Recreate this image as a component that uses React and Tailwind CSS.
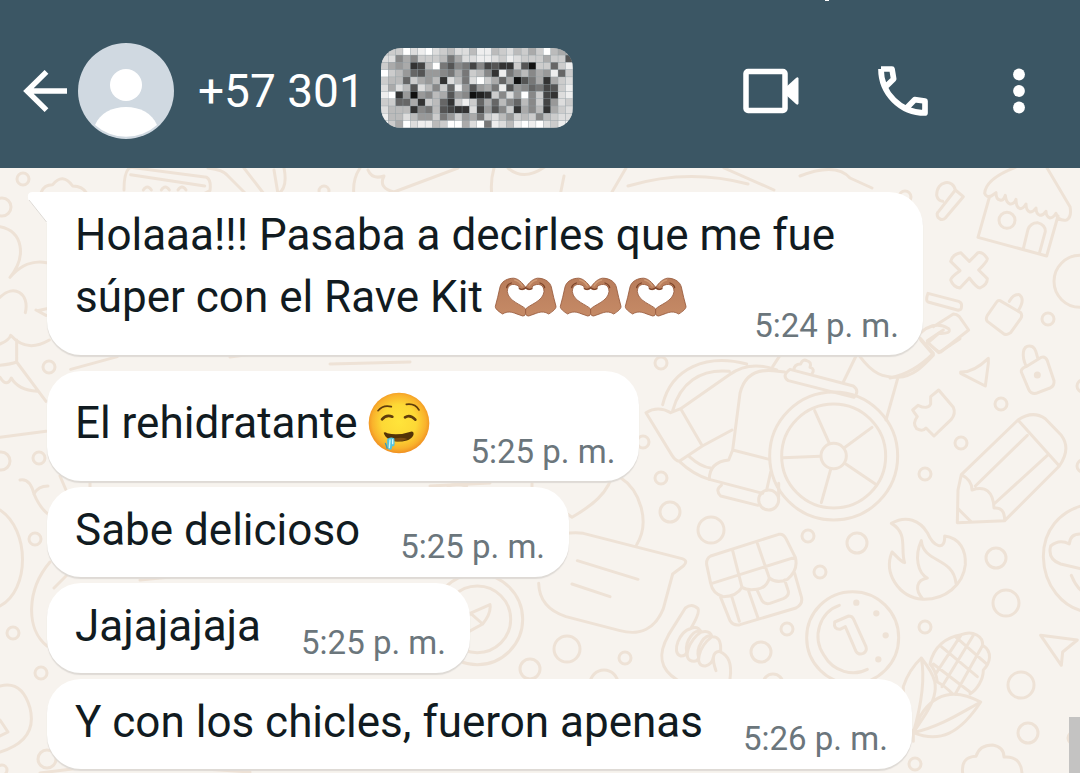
import { clsx } from 'clsx'

const messages = [
  { text: 'Holaaa!!! Pasaba a decirles que me fue súper con el Rave Kit', emoji: 'hands', time: '5:24 p. m.', tail: true },
  { text: 'El rehidratante', emoji: 'drool', time: '5:25 p. m.' },
  { text: 'Sabe delicioso', time: '5:25 p. m.' },
  { text: 'Jajajajaja', time: '5:25 p. m.' },
  { text: 'Y con los chicles, fueron apenas', time: '5:26 p. m.' }
]

// one hex digit of grey per cell
const mosaic = [
  'cccfdefdcbddbeebcdbcacfbaa',
  'dd8a8cccb7addeedcedcccacc5',
  'ca9a34bf7587484533c51cc6ce',
  'fcb9659987a7cb83e79b8a9e6c',
  'cbb6ca9b3db7dfca6a157a3acd',
  'dadb5db8c6e959a7e5986745ce',
  'ef39198ba598123c8d9f8c43de',
  'cc66a3cb63cec6a6b86b8c49dc',
  'dbbb387b5433d4958c3a8b3acd',
  'ebbdb99c79c9a7cdb9cbc8bcdd',
  'ecafdeebcffadf7edbefefdcee'
]

function HiddenNumber() {
  return (
    <svg viewBox="0 0 192 80" className="block h-20 w-48 rounded-[20px]" role="img" aria-label="Número oculto">
      <rect width="192" height="80" fill="#94a0a6" />
      {mosaic.map((row, y) =>
        row.split('').map((v, x) => (
          <rect
            key={`${x}-${y}`}
            x={x * 7.385}
            y={y * 7.27}
            width="7"
            height="6.9"
            fill={`#${v.repeat(6)}`}
          />
        ))
      )}
    </svg>
  )
}

function Header() {
  return (
    <header className="relative flex h-[168px] items-center bg-[#3b5664] pt-[14px] pr-[54px] pl-[22px] text-white">
      <span className="absolute top-0 left-[825px] h-px w-1 bg-white" />
      <button aria-label="Atrás" className="shrink-0">
        <svg viewBox="0 0 46 42" className="h-[42px] w-[46px]" fill="none" stroke="currentColor" strokeWidth="5.4">
          <path d="M24.500 1.900 5 21l19.500 19.100M5 21h40" />
        </svg>
      </button>
      <button className="ml-[10px] flex min-w-0 items-center">
        <svg viewBox="0 0 96 96" className="size-24 shrink-0" aria-hidden="true">
          <circle cx="48" cy="48" r="48" fill="#d0d9e1" />
          <circle cx="48" cy="42" r="16" fill="#fff" />
          <path d="M17 82C22 70 34 64 48 64s26 6 31 18A46.500 46.500 0 0 1 17 82Z" fill="#fff" />
        </svg>
        <span className="ml-6 text-[46px] leading-14 whitespace-nowrap">+57 301</span>
        <span className="mb-1.5 ml-4 shrink-0"><HiddenNumber /></span>
      </button>
      <div className="ml-auto flex shrink-0 items-center">
        <button aria-label="Videollamada">
          <svg viewBox="0 0 56 46" className="h-[46px] w-14">
            <rect x="3" y="3.500" width="39" height="39" rx="2" fill="none" stroke="currentColor" strokeWidth="5.500" />
            <path d="M42 20 53 10q2-1.500 2.500.5v25q-.5 2-2.500.5L42 26Z" fill="currentColor" />
          </svg>
        </button>
        <button aria-label="Llamar" className="ml-[79px]">
          <svg viewBox="0 0 150 150" className="size-[50px]" fill="none" stroke="currentColor" strokeWidth="17" strokeLinejoin="round">
            <path d="M9 9H42L47 39 24 61M9 9C9 82 68 141 141 141V105L110 101 88 124" />
          </svg>
        </button>
        <button aria-label="Más opciones" className="ml-[84px]">
          <svg viewBox="0 0 14 46" className="h-[46px] w-[14px]" fill="currentColor">
            <circle cx="7" cy="6.500" r="5.900" />
            <circle cx="7" cy="23" r="5.900" />
            <circle cx="7" cy="39.500" r="5.900" />
          </svg>
        </button>
      </div>
    </header>
  )
}

function HeartHands() {
  return (
    <svg viewBox="36 32 195 126" className="-my-2 inline-block h-[42px] w-[65px] align-[2px]" role="img" aria-label="Manos en forma de corazón">
      <defs>
        <linearGradient id="skin" x1="0" y1="0" x2="0" y2="1">
          <stop offset="0" stopColor="#b97d5b" />
          <stop offset="1" stopColor="#c58a66" />
        </linearGradient>
        <g id="hand">
          <path
            d="M131 66C122 54 107 35 88 39 72 41 58 50 54 65L47 96 40 123C39 130 50 139 62 146 76 137 90 140 102 145L122 152Q129 153 131 145V131C120 118 79 108 76 79 76 56 94 53 110 62 111 74 123 76 131 69Z"
            fill="url(#skin)"
            stroke="#96593b"
            strokeWidth="2.500"
            strokeLinejoin="round"
          />
          <path d="M74 67Q75 58 88 53M112 70Q121 75 131 67" fill="none" stroke="#7d4429" strokeWidth="4" strokeLinecap="round" />
          <path d="M98 44Q114 48 121 62" fill="none" stroke="#d09b76" strokeWidth="4" strokeLinecap="round" />
        </g>
      </defs>
      <use href="#hand" />
      <use href="#hand" transform="translate(262 0) scale(-1 1)" />
    </svg>
  )
}

function DroolFace() {
  return (
    <svg viewBox="0 0 186 186" className="-my-2 inline-block size-[62px] align-[-8px]" role="img" aria-label="Cara babeando">
      <defs>
        <radialGradient id="face" cx=".5" cy=".48" r=".52">
          <stop offset="0" stopColor="#ffe43a" />
          <stop offset=".55" stopColor="#fdd835" />
          <stop offset=".85" stopColor="#f9b22c" />
          <stop offset="1" stopColor="#f08f22" />
        </radialGradient>
      </defs>
      <circle cx="93" cy="93" r="91" fill="url(#face)" />
      <g fill="none" stroke="#5f3c0c" strokeLinecap="round">
        <path d="M30 56Q46 37 70 44" strokeWidth="5" />
        <path d="M115 37Q141 33 153 54" strokeWidth="5" />
        <path d="M42 82Q55 66 73 74" strokeWidth="8" />
        <path d="M111 76Q126 66 142 83" strokeWidth="8" />
      </g>
      <path d="M47 122Q51 118 58 124 90 132 128 119 137 117 137 126C132 157 55 157 47 122Z" fill="#533307" />
      <path d="M66 144Q95 153 118 141 96 132 66 144Z" fill="#7c4d10" />
      <path d="M57 142Q66 133 79 139L80 155Q79 166 73 162L71 171Q62 178 58 166Z" fill="#55c5df" />
      <path d="M66 144 64 167M74 143V155" stroke="#d8f6f6" strokeWidth="4" strokeLinecap="round" />
      <path d="M52 153 58 170" stroke="#3a9bbb" strokeWidth="4" />
    </svg>
  )
}

function Bubble({ message }) {
  const { text, emoji, time, tail } = message
  return (
    <li
      className={clsx(
        'relative flow-root w-fit max-w-[876px] rounded-[34px] bg-white pr-6 pl-7 shadow-[0_2px_1px_#dedad5]',
        tail && 'mb-4 rounded-tl-none pt-3 pb-[9px]',
        !tail && emoji && 'mb-1.5 pt-[21px] pb-[9px]',
        !emoji && 'mb-1.5 pt-3 pb-[10px]'
      )}
    >
      {tail && (
        <svg viewBox="0 0 24 40" className="absolute top-0 -left-5 h-10 w-6" aria-hidden="true">
          <path d="M20 31 1.500 8Q-1 0 6 0H24V40H20Z" fill="#fff" />
          <path d="M19.500 30 2 8" stroke="#dedad5" strokeWidth="1" />
        </svg>
      )}
      <span className="text-[44px] leading-[62px] text-[#111b21]">
        {text}{' '}
        {emoji === 'hands' && (
          <span className="whitespace-nowrap"><HeartHands /><HeartHands /><HeartHands /></span>
        )}
        {emoji === 'drool' && <DroolFace />}
      </span>
      <time className={clsx('float-right ml-10 text-[33px] leading-10 text-[#6b767c]', emoji ? 'mt-10' : 'mt-7')}>
        {time}
      </time>
    </li>
  )
}

const dots = [
  [661, 363, 6], [643, 442, 6], [661, 478, 6], [670, 512, 10], [711, 530, 13], [808, 536, 6],
  [857, 543, 10], [820, 572, 6], [925, 474, 6], [961, 443, 6], [1001, 404, 6], [1048, 319, 6],
  [996, 558, 10], [1006, 603, 13], [925, 627, 6], [787, 629, 6], [761, 652, 10], [773, 684, 10],
  [1021, 685, 13], [1028, 733, 10], [1074, 738, 6], [915, 764, 6], [1083, 386, 6], [1083, 466, 6],
  [567, 649, 13], [530, 669, 10], [625, 658, 6], [604, 684, 14], [23, 179, 6], [2, 207, 9],
  [49, 367, 6], [39, 458, 6], [1, 461, 9], [35, 539, 6], [13, 633, 6], [41, 673, 6], [47, 759, 9],
  [324, 191, 5], [905, 197, 6], [2, 770, 5]
]

function Wallpaper() {
  return (
    <svg
      viewBox="0 168 1080 605"
      preserveAspectRatio="xMinYMin slice"
      className="absolute inset-0 h-full w-full"
      fill="none"
      stroke="#eee2d6"
      strokeWidth="3"
      strokeLinecap="round"
      strokeLinejoin="round"
      aria-hidden="true"
    >
      {dots.map(([x, y, r]) => (
        <circle key={`${x}-${y}`} cx={x} cy={y} r={r} />
      ))}

      {/* wheelbarrow, pencil, puzzle piece, padlock */}
      <g transform="translate(640 340) scale(.33333)" strokeWidth="9">
        <circle cx="581" cy="348" r="192" />
        <circle cx="581" cy="348" r="156" />
        <circle cx="581" cy="348" r="38" />
        <path d="m568 310-44-98M612 324l84-62M614 370l92 62M572 388l-28 100M541 349l-113 4" />
        <path d="M18 218Q54 196 92 218L122 206 187 318 118 364Q106 362 96 346ZM122 206 268 104Q330 60 410 90M68 194C94 84 200 40 320 72M98 212C120 130 180 86 268 94M187 318 276 270M148 350Q184 382 212 384M118 364Q160 404 208 418" />
        <path d="M278 330 300 160Q318 84 400 92L434 96M278 330 266 360Q208 366 208 418L368 460M278 330 388 358M392 396 380 450M244 436Q224 450 242 468L354 496M416 430V470" />
        <circle cx="386" cy="480" r="30" />
        <path d="m450 88 190 50q20 14 2 34L445 122q-22-14 5-34ZM462 90q0-18 20-18 6-16 18-10 16 4 10 20 16 4 6 20M398 80l22-34M610 126l38-78M660 50C700 104 730 112 774 112 820 110 850 78 880 46M774 112 738 240M842 0l38 44M866 10l30 28 64-42M910-30l-48 32" />
        <path d="M962 96Q1000 98 1045 55V70L1036 138 962 100Z" />
        <path d="M1158 80 1204 52Q1216 48 1222 62L1242 122Q1244 138 1230 144L1188 160Q1172 162 1166 148L1144 96Q1142 86 1158 80ZM1158 78C1144 46 1148 18 1168 18S1188 40 1194 56" />
        <circle cx="1192" cy="105" r="6" fill="#eee2d6" />
        <path d="m896 150 44 52q8 18-6 36l-52 50-24-24q-10 12-28 2-14-16 2-36-8-10-14-20l16-14q30 14 38-4 0-18 0-22Z" />
        <path d="M964 404 1134 240Q1178 210 1216 236L1264 286Q1294 326 1258 378L1094 542 952 548 954 450ZM1134 240 1258 378M1162 286 1006 438M1222 346 1062 492M964 404Q996 420 996 450 1058 430 1062 504 1094 500 1094 542M954 506l40 40" />
      </g>

      {/* market stall, fire, coin, shaka, corn, globe, cloud */}
      <g transform="translate(640 520) scale(.33333)" strokeWidth="9">
        <path d="M212 108 416 43Q430 40 438 56L466 112Q476 150 442 178 410 192 388 174 380 204 350 208 320 212 306 202 290 230 250 230 218 222 212 190L200 134Q198 116 212 108ZM278 92 306 202M352 70 388 174M216 190 464 112M242 232 270 302Q280 318 300 314L468 264Q490 252 484 230L464 160M276 232l22 72M326 214l28 80M352 212l14 30q8 12 24 8l40-14q20-10 14-26l-10-30" />
        <path d="M754 10C800-16 840 2 862 38 880 80 916 96 914 48 960 54 978 90 976 134 970 194 916 240 848 238 776 232 730 160 756 96 772 110 780 124 794 128 780 90 806 40 754 10ZM848 236C824 210 828 180 862 174 834 160 822 110 844 62 850 130 940 110 948 190" />
        <circle cx="638" cy="353" r="138" />
        <path d="M598 256C540 276 514 350 552 406 580 456 640 470 682 448M584 306l42-18q10 0 14 8l38 84q4 14-8 20-14 6-22-6l-32-74-16 8q-20 0-16-22Z" />
        <g fill="#eee2d6">
          <circle cx="649" cy="248" r="5" /><circle cx="709" cy="280" r="5" />
          <circle cx="737" cy="346" r="5" /><circle cx="715" cy="418" r="5" />
        </g>
        <path d="M112 480C56 446 54 400 86 344L136 264Q156 248 174 266 180 280 152 326M152 326C120 330 92 400 122 408Q138 408 140 396C134 360 166 324 184 336 150 354 120 424 162 424Q172 424 176 414C166 384 196 336 216 350 176 380 160 440 196 438 214 434 218 424 220 412M152 326q20-10 32 10M184 336q26-6 32 14 28-2 26 42M228 452q-20-54 10-58 42 16 32 82" />
        <path d="M844 414C880 460 910 500 858 580L820 638Q788 600 790 500 806 450 844 414ZM844 414Q860 500 820 638C850 540 920 490 1022 546 960 640 900 670 820 638 900 620 960 580 1022 546M820 638v26" />
        <path d="M870 432C880 380 920 350 964 344 1000 330 1030 350 1028 376 1060 396 1050 430 1030 450 1030 480 1010 510 990 522M870 432q18 20 22 54 20 10 44 34M904 380 1012 470M880 432l110 84M946 350l92 80M964 344l-76 116M1028 376l-82 146M1000 346 906 500" />
        <path d="M1202 346l110 14-44 36-4 40ZM968 759q-6-48 40-50 10-34 50-34 34 6 34 36 50-4 54 48M1330-44C1260-26 1210 30 1210 110 1212 200 1270 260 1330 274M1320 42q-30 0-32 30-30-16-56 6-10 40 30 54l58 14M1294 166q12 30 30 46" />
      </g>

      {/* little house, letters and cards on the right */}
      <g transform="translate(900 160) scale(.33333)" strokeWidth="9">
        <path d="M346 22C300 40 256 66 254 100q6 14 20 8l14-10q0 20 12 22 10 4 16-14 2 22 14 26 12 2 18-14 0 24 12 28 10 0 18-14 0 20 12 24 10 0 18-12 0 18 12 22 10 0 18-12 0 16 12 20 10 0 18-14 6 24 32 20 16-10 10-40L440 22M268 112 234 232 440 288 474 168M370 266l14-58q8-20 28-20 24 6 24 26l-18 66" />
        <circle cx="321" cy="181" r="24" />
        <path d="M110 106C110 60 160 56 166 90L190 110 136 174Q126 184 114 172 108 160 116 154L166 90M110 106q4 16 18 18" />
        <path d="m182 278 26 26 26-26q14-4 28 18 0 8-26 34l26 26q0 18-22 28-10 0-32-30l-28 30q-20-2-28-24 0-8 28-28l-28-28q6-22 30-26Z" />
        <path d="m84 400 92 24q12 4 8 20-2 8-12 6l-88-24q-8-4 0-26ZM50 530q50-54 96-24 10 16-30 14l-30 26M100 500l60-38q10 0 18 8l28 40-84 66q-10 0-40-30M60 534l40 46C60 620 20 644-30 654" />
        <path d="m300 422 62 36q6 8 0 18l-30 42q-10 8-20 4l-50-38q-6-6 0-18l28-40q4-6 10-4ZM328 424q12-22 30-20 18 14-2 46M540 286a78 78 0 0 0 0 156" />
      </g>

      {/* chat bubble and compass between the messages */}
      <g transform="translate(440 470) scale(.33333)" strokeWidth="9">
        <path d="M340 204Q380 184 430 190L726 266Q746 272 730 288L698 312 670 416C646 476 600 498 540 482L378 440Q298 414 296 340M412 272l182 56M396 342l114 38M520 0C510 70 450 110 396 142L370 124M540 22C600 60 632 156 590 224" />
        <circle cx="112" cy="448" r="136" />
        <circle cx="112" cy="448" r="100" />
        <path d="M60 486 90 430 150 404Q154 430 128 462L70 494M92 430l36 32M24 48q24-8 56 0M276 40v10" />
      </g>

      {/* left edge */}
      <g transform="translate(0 160) scale(.33333)" strokeWidth="9">
        <path d="M124 96q8-22 34-22 30-38 60 4 30 0 42 22M0 200C70 214 80 290 30 352 60 316 100 300 140 308M0 412C40 370 90 400 76 458M0 552Q28 540 32 526 80 580 148 540M50 540V606L138 724M0 616Q34 612 50 606M0 652q20 32 34 2 20 36 78 40M108 450l30 16M112 452l28-6M0 832 138 814M212 628 352 590M372 90q0-60 20-68l228 30q14 8 10 40l-16 8M392 44l222 34M430 90q12-18 24 0M484 90q12-18 24 0M534 90q12-18 24 0" />
      </g>
      <path d="M208 168q16 2 20 8l18 18M244 168l20 26M274 170l4 24M284 168q4 20-6 26M360 168q-8 12-6 28M368 170q4 10 16 6-6 12 10 16L458 168M494 168q-4 14-2 28M508 168q16 14 38-2M564 176l-4 20M612 192l14-24M628 186q60-18 120-2M724 168l50 22M800 176q36-14 50 2l22 10" />
      <path d="M0 510C30 530 30 590 0 606M50 562C26 590 26 630 47 646M54 588l16-16M0 686Q22 680 30 708 38 740 0 752M0 720l8 12-8 4M20 480q10-2 14 14 6 14 14 20M34 494q4-8 14-8M60 476l6 14M90 482v8M40 773l40-5M140 580l30-3M190 768l60 4M230 357l30-4M330 364l80-2M430 486l60-3" />
    </svg>
  )
}

export default function App() {
  return (
    <div className="min-h-screen bg-[#f7f3ee] font-['Roboto','Liberation_Sans',sans-serif]">
      <Header />
      <main className="relative min-h-[calc(100vh-168px)] overflow-hidden">
        <Wallpaper />
        <ul className="relative -mb-2 pt-6 pr-6 pl-[47px]">
          {messages.map((m) => (
            <Bubble key={m.text} message={m} />
          ))}
        </ul>
        <div className="absolute right-0 bottom-0 h-14 w-[11px] bg-[#c4c3c2]" />
      </main>
    </div>
  )
}
